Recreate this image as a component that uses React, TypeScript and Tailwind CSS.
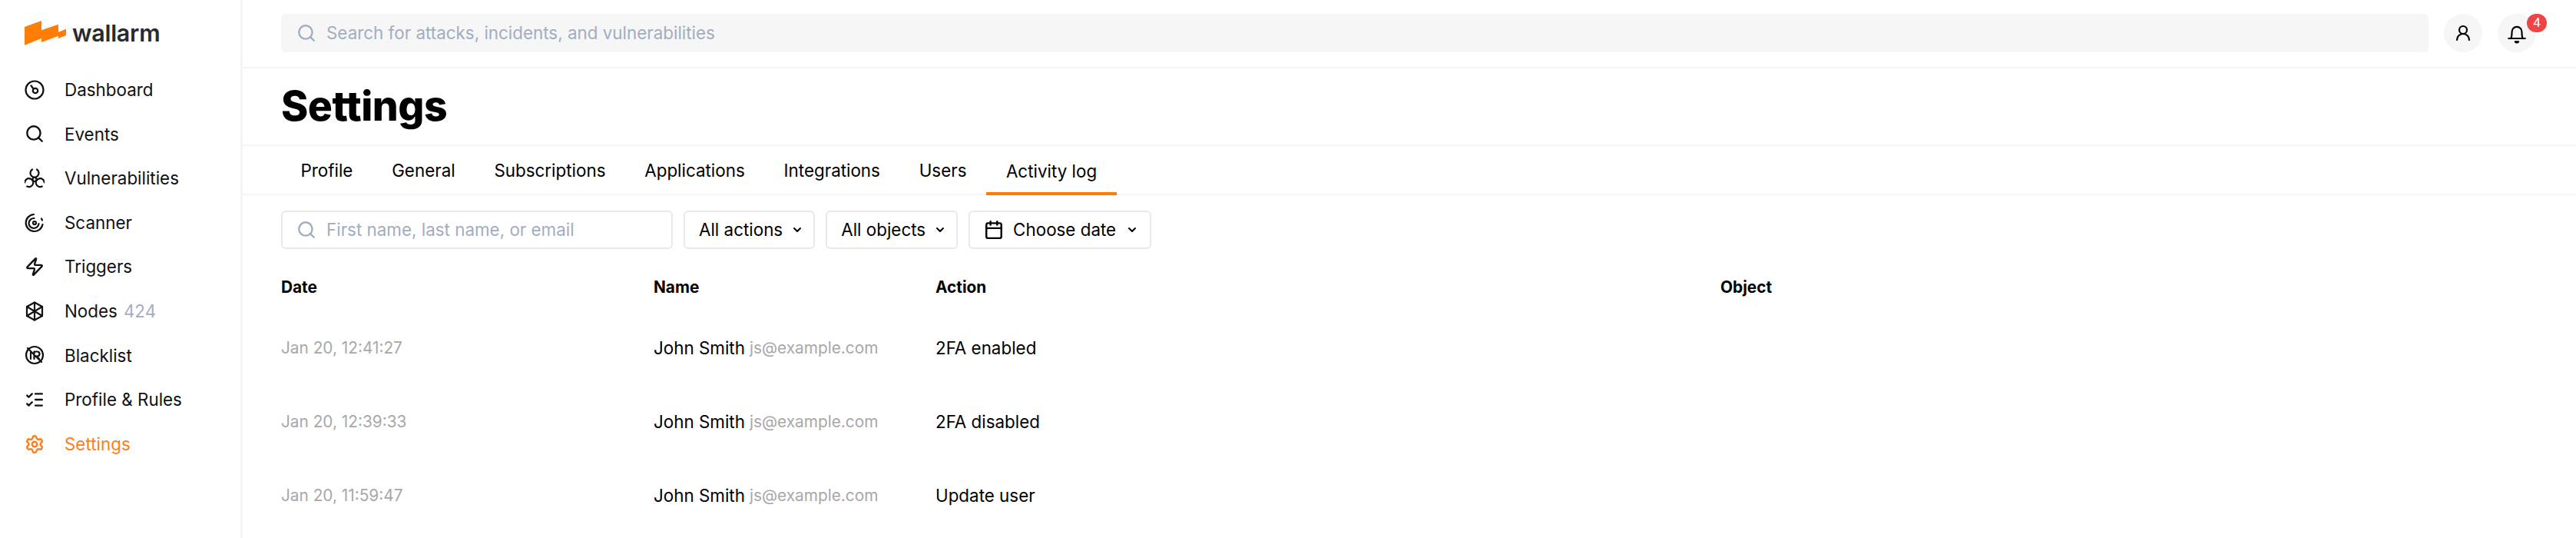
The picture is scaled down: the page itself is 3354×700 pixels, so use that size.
import React from "react";
import { Search, Zap, ListChecks, Settings, ChevronDown, Calendar, UserRound } from "lucide-react";

const S = { fill: "none", stroke: "currentColor", strokeWidth: 2, strokeLinecap: "round" as const, strokeLinejoin: "round" as const };

function Dash() {
  return (
    <svg width="26" height="26" viewBox="0 0 26 26" {...S} strokeWidth={2.2}>
      <circle cx="13" cy="13" r="11.500" />
      <circle cx="14" cy="14" r="3.200" />
      <path d="M11.500 11.500L8.500 7.500" />
    </svg>
  );
}
function Bio() {
  const lobe = "M10 1.500A5.500 5.500 0 1 0 16 1.500";
  return (
    <svg width="26" height="26" viewBox="0 0 26 26" {...S} strokeWidth={2.2}>
      <path d={lobe} />
      <path d={lobe} transform="rotate(120 13 14.500)" />
      <path d={lobe} transform="rotate(240 13 14.500)" />
      <circle cx="13" cy="14.500" r="2.500" />
    </svg>
  );
}
function Scan() {
  return (
    <svg width="26" height="26" viewBox="0 0 26 26" {...S} strokeWidth={2.2}>
      <path d="M23.500 15a11 11 0 1 1-11.500-13" />
      <path d="M18.500 14a6.500 6.500 0 1 1-6-7" />
      <circle cx="13" cy="13" r="2" />
      <path d="M23 9.500l-1-2" />
    </svg>
  );
}
function Nodes() {
  return (
    <svg width="26" height="26" viewBox="0 0 26 26" {...S} strokeWidth={2.2}>
      <path d="M13 1.500l10 5.500v12L13 24.500 3 19V7z" />
      <path d="M13 1.500v23M3 7l20 12M23 7L3 19" />
    </svg>
  );
}
function Black() {
  return (
    <svg width="26" height="26" viewBox="0 0 26 26" {...S} strokeWidth={2.2}>
      <circle cx="13" cy="13" r="11" />
      <path d="M8 9v9M12.500 18V8.500h4a3 3 0 0 1 0 6h-4M16 14.500l3 3.500M4 4l18 18" />
    </svg>
  );
}
function BellIcon() {
  return (
    <svg width="28" height="28" viewBox="0 0 26 26" {...S} strokeWidth={2}>
      <path d="M3 19.500h20M5.500 19.500c1.500-1.500 1.500-4 1.500-8a6 6 0 0 1 12 0c0 4 0 6.500 1.500 8" />
      <path d="M10.500 23a2.500 2 0 0 0 5 0z" fill="currentColor" strokeWidth={1} />
    </svg>
  );
}

const nav: [string, React.ReactNode, string?][] = [
  ["Dashboard", <Dash />],
  ["Events", <Search size={26} strokeWidth={2.2} />],
  ["Vulnerabilities", <Bio />],
  ["Scanner", <Scan />],
  ["Triggers", <Zap size={26} strokeWidth={2.2} />],
  ["Nodes", <Nodes />, "424"],
  ["Blacklist", <Black />],
  ["Profile & Rules", <ListChecks size={26} strokeWidth={2.2} />],
];

const tabs = ["Profile", "General", "Subscriptions", "Applications", "Integrations", "Users"];

const rows = [
  ["Jan 20, 12:41:27", "2FA enabled"],
  ["Jan 20, 12:39:33", "2FA disabled"],
  ["Jan 20, 11:59:47", "Update user"],
];

function Pick({ label, icon }: { label: string; icon?: React.ReactNode }) {
  return (
    <div className={icon ? "flex h-[50px] items-center rounded-[6px] border-2 border-[#e8e9f0] bg-white pl-[18px] pr-[15px]" : "flex h-[50px] items-center rounded-[6px] border-2 border-[#e8e9f0] bg-white pl-[18px] pr-[13px]"}>
      {icon}
      <span className="text-[22.400px] text-black">{label}</span>
      <ChevronDown size={16} strokeWidth={3} className={icon ? "ml-[13px] text-black" : "ml-[11px] text-black"} />
    </div>
  );
}

export default function App() {
  return (
    <div className="flex h-[700px] w-[3354px] overflow-hidden bg-white font-['Inter',sans-serif] text-black">
      <aside className="flex w-[313px] shrink-0 flex-col">
        <div className="flex h-[88px] items-start pl-[32px] pt-[27px]">
          <svg width="54" height="32" viewBox="0 0 54 32" fill="#ff7d05">
            <path d="M0 8L22 0V23L0 31.700Z" />
            <path d="M22 12.300L44 4.700V19.700L22 28Z" />
            <path d="M44 14.700L54 10.700V19L44 23Z" />
          </svg>
          <span className="ml-[8px] mt-[-2px] text-[30.500px] font-semibold leading-[36px] tracking-[-0.3px] text-[#2a2a2a]">wallarm</span>
        </div>
        <nav className="flex flex-col pl-[32px]">
          {nav.map(([n, icon, c]) => (
            <div key={n} className="flex h-[57.600px] items-center text-[22.400px] text-[#111]">
              <span className="flex w-[26px] items-center justify-center text-[#111]">{icon}</span>
              <span className="ml-[26px]">{n}</span>
              {c && <span className="ml-[8px] text-[#a3adc0]">{c}</span>}
            </div>
          ))}
          <div className="flex h-[57.600px] items-center text-[22.400px] text-[#ff7d1a]">
            <span className="flex w-[26px] items-center justify-center">
              <Settings size={26} strokeWidth={2.2} />
            </span>
            <span className="ml-[26px]">Settings</span>
          </div>
        </nav>
      </aside>
      <main className="min-w-0 flex-1 border-l-[3px] border-[#f5f5f6]">
        <header className="flex h-[89px] items-start border-b-[2px] border-[#f5f5f6] pl-[50px] pr-[52px] pt-[18px]">
          <div className="flex h-[50px] flex-1 items-center rounded-[6px] bg-[#f6f6f7] pl-[20px] text-[22.400px] text-[#a3adc0]">
            <Search size={26} strokeWidth={2.2} />
            <span className="ml-[13px]">Search for attacks, incidents, and vulnerabilities</span>
          </div>
          <div className="ml-[20px] flex h-[50px] w-[50px] items-center justify-center rounded-full bg-[#f6f6f7]">
            <UserRound size={24} strokeWidth={2.2} />
          </div>
          <div className="relative ml-[20px] flex h-[50px] w-[50px] items-center justify-center rounded-full bg-[#f6f6f7]">
            <BellIcon />
            <span className="absolute right-[-14px] top-0 flex h-[24px] w-[26px] items-center justify-center rounded-full bg-[#ef4444] font-['Roboto',sans-serif] text-[17px] text-white">4</span>
          </div>
        </header>
        <div className="flex h-[101px] items-center border-b-[2px] border-[#f5f5f6] pl-[50px]">
          <h1 className="text-[53.500px] font-extrabold tracking-[-0.5px] text-black">Settings</h1>
        </div>
        <div className="flex h-[64px] items-stretch border-b-[2px] border-[#f5f5f6] pl-[50px]">
          {tabs.map((t) => (
            <div key={t} className="flex items-center px-[25.400px] pt-[2px] text-[22.400px] text-black">{t}</div>
          ))}
          <div className="mb-[-2px] flex items-center border-b-[4px] border-[#ff7d05] px-[26px] pt-[6px] text-[22.400px] text-black">Activity log</div>
        </div>
        <div className="flex items-center gap-[14px] pl-[50px] pt-[20px]">
          <div className="flex h-[50px] w-[510px] items-center rounded-[6px] border-2 border-[#e8e9f0] pl-[18px] text-[22.400px] text-[#a3adc0]">
            <Search size={26} strokeWidth={2.2} />
            <span className="ml-[13px]">First name, last name, or email</span>
          </div>
          <Pick label="All actions" />
          <Pick label="All objects" />
          <Pick label="Choose date" icon={<Calendar size={26} strokeWidth={2.2} className="mr-[12px] text-black" />} />
        </div>
        <div className="grid grid-cols-[485px_367px_1022px_1fr] pl-[50px] pt-[36px]">
          <div className="text-[20.800px] font-bold leading-[28px]">Date</div>
          <div className="text-[20.800px] font-bold leading-[28px]">Name</div>
          <div className="text-[20.800px] font-bold leading-[28px]">Action</div>
          <div className="text-[20.800px] font-bold leading-[28px]">Object</div>
          {rows.map(([d, a], i) => (
            <React.Fragment key={d}>
              <div className={i === 0 ? "mt-[17px] flex h-[96px] items-center text-[20.800px] text-[#a8a8a8]" : "flex h-[96px] items-center text-[20.800px] text-[#a8a8a8]"}>{d}</div>
              <div className={i === 0 ? "mt-[17px] flex h-[96px] items-center text-[22.400px] text-black" : "flex h-[96px] items-center text-[22.400px] text-black"}>
                John Smith<span className="ml-[6px] text-[20.800px] text-[#a8a8a8]">js@example.com</span>
              </div>
              <div className={i === 0 ? "mt-[17px] flex h-[96px] items-center text-[22.400px] text-black" : "flex h-[96px] items-center text-[22.400px] text-black"}>{a}</div>
              <div className="h-[96px]" />
            </React.Fragment>
          ))}
        </div>
      </main>
    </div>
  );
}
